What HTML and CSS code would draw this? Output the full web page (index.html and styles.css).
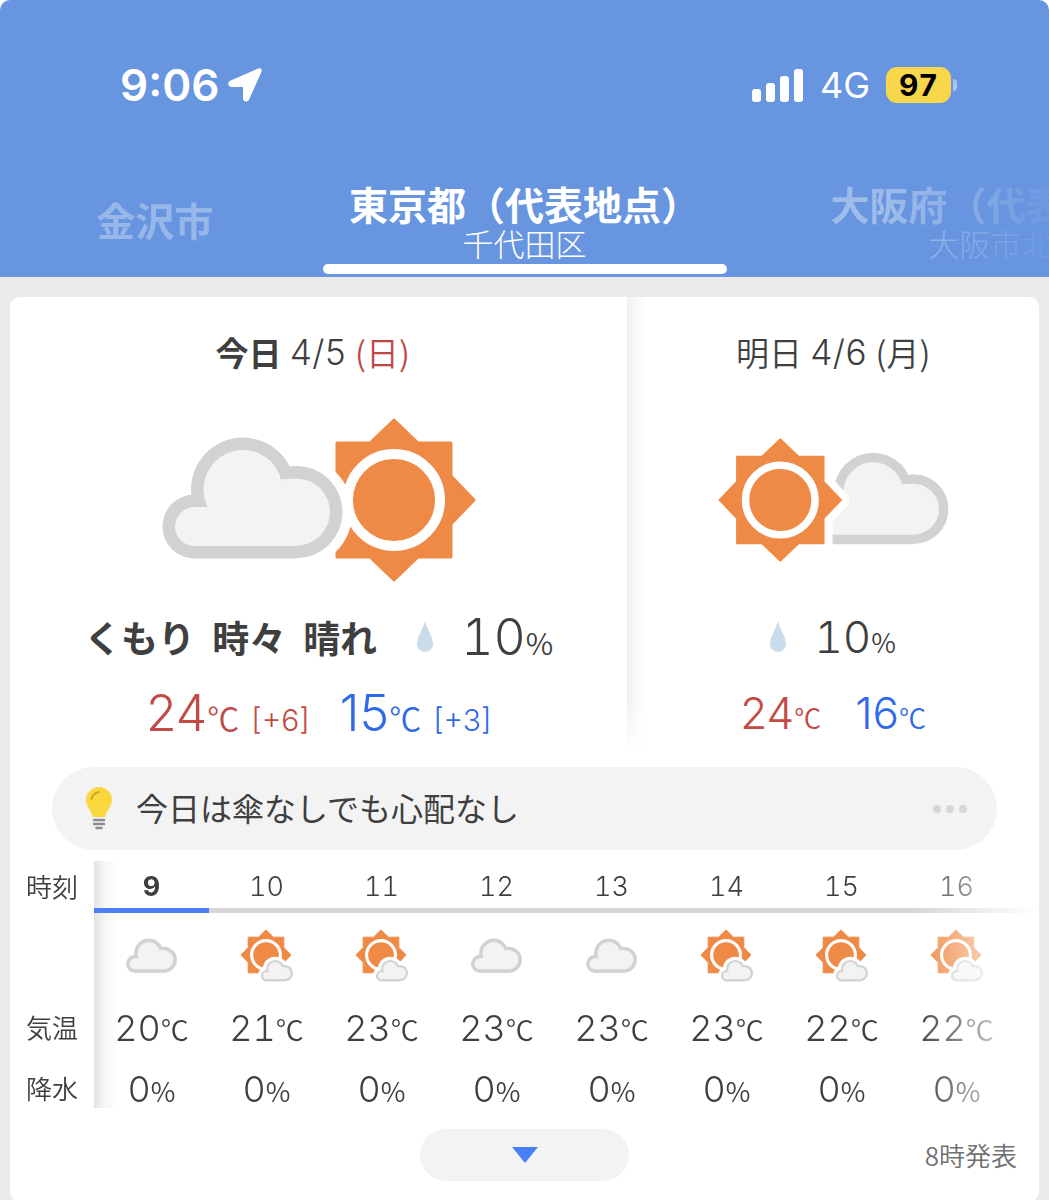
FILE: index.html
```html
<!DOCTYPE html>
<html lang="ja">
<head>
<meta charset="utf-8">
<meta name="viewport" content="width=device-width, initial-scale=1">
<title>天気予報</title>
<link rel="stylesheet" href="styles.css">
</head>
<body>
<svg class="defs" aria-hidden="true">
  <defs>
    <g id="cloud-outer">
      <circle cx="194.5" cy="526.5" r="32"/><circle cx="243" cy="489.5" r="52"/><circle cx="296.5" cy="512" r="46"/>
      <rect x="194.5" y="508" width="102" height="50.5"/>
    </g>
    <g id="cloud">
      <use href="#cloud-outer" fill="#d2d2d2"/>
      <g fill="#f3f3f3">
        <circle cx="194.5" cy="526.5" r="19.5"/><circle cx="243" cy="489.5" r="39.5"/><circle cx="296.5" cy="512" r="33.5"/>
        <rect x="194.5" y="507" width="102" height="39"/>
        <path d="M282 479h14.500v40h-30z"/>
      </g>
    </g>
    <path id="sun-shape" d="M-57 -57H-24L0 -80L24 -57H57V-24L80 0L57 24V57H24L0 80L-24 57H-57V24L-80 0L-57 -24Z" stroke-linejoin="round"/>
    <g id="sun">
      <use href="#sun-shape" fill="#ef8a46" stroke="#ef8a46" stroke-width="3"/>
      <circle r="46" fill="none" stroke="#fff" stroke-width="10"/>
    </g>
    <symbol id="hour-cloud" viewBox="0 0 56 56">
      <use href="#cloud" transform="translate(-44 -113.200) scale(.283)"/>
    </symbol>
    <symbol id="hour-sun-cloud" viewBox="0 0 56 56">
      <use href="#sun" transform="translate(27 27) scale(.313)"/>
      <g transform="translate(-7 -46) scale(.178)">
        <use href="#cloud-outer" fill="#fff" stroke="#fff" stroke-width="36"/>
        <use href="#cloud"/>
      </g>
    </symbol>
    <symbol id="drop" viewBox="0 0 16 32">
      <path d="M8 0C10 8 16 16 16 23A8 8 0 0 1 0 23C0 16 6 8 8 0Z" fill="#c8dcec"/>
    </symbol>
  </defs>
</svg>

<header class="header">
  <div class="status">
    <div class="status-left">
      <span class="clock">9:06</span>
      <svg class="locate" viewBox="0 0 36 36" aria-hidden="true"><path d="M3 15L31.500 2.500Q34.500 1.500 33.500 4.500L21 32.500Q18.500 35 17 32V19H4Q1 17.500 3 15Z" fill="#fff" stroke="#fff" stroke-width="2" stroke-linejoin="round"/></svg>
    </div>
    <div class="status-right">
      <svg class="signal" viewBox="0 0 52 33" aria-hidden="true" fill="#fff"><rect y="20" width="9" height="13" rx="3"/><rect x="14" y="14" width="9" height="19" rx="3"/><rect x="28" y="7" width="9" height="26" rx="3"/><rect x="42" width="9" height="33" rx="3"/></svg>
      <span class="network">4G</span>
      <span class="battery">97</span>
      <span class="battery-tip"></span>
    </div>
  </div>
  <nav class="places">
    <a class="place place-prev" href="#kanazawa">金沢市</a>
    <a class="place place-current" href="#tokyo" aria-current="page">東京都（代表地点）<span class="ward">千代田区</span></a>
    <a class="place place-next" href="#osaka">大阪府（代表地点）<span class="ward">大阪市北区</span></a>
  </nav>
</header>

<main class="page">
  <div class="card">
    <div class="days">
      <section class="day">
        <h2 class="date date-today"><b>今日</b><span class="md">4/5</span><span class="sunday">(日)</span></h2>
        <svg class="weather weather-large" viewBox="162 418 314 164" role="img" aria-label="くもり時々晴れ">
          <use href="#sun" transform="translate(394 500)"/>
          <path d="M308 470H334.500V530H308Z" fill="#fff"/>
          <path d="M296.500 456A56 56 0 0 1 296.500 568Z" fill="#fff"/>
          <use href="#cloud"/>
        </svg>
        <div class="summary">
          <strong class="condition"><span>くもり</span> <span>時々</span> <span>晴れ</span></strong>
          <svg class="drop" aria-hidden="true"><use href="#drop"/></svg>
          <span class="chance">10<small>%</small></span>
        </div>
        <div class="temps">
          <span class="high">24<small>℃</small><span class="diff">[+6]</span></span>
          <span class="low">15<small>℃</small><span class="diff">[+3]</span></span>
        </div>
      </section>
      <section class="day day-next">
        <h2 class="date"><span>明日</span><span class="md">4/6</span><span>(月)</span></h2>
        <svg class="weather weather-medium" viewBox="717 438 231 124" role="img" aria-label="晴れのちくもり">
          <use href="#cloud" transform="translate(688.500 122) scale(.756)"/>
          <path d="M800 520H831.500V550H800Z" fill="#fff"/>
          <g transform="translate(779.300 500) scale(.756)">
            <use href="#sun-shape" fill="#fff" stroke="#fff" stroke-width="23"/>
            <use href="#sun"/>
          </g>
        </svg>
        <div class="summary">
          <svg class="drop" aria-hidden="true"><use href="#drop"/></svg>
          <span class="chance">10<small>%</small></span>
        </div>
        <div class="temps">
          <span class="high">24<small>℃</small></span>
          <span class="low">16<small>℃</small></span>
        </div>
      </section>
    </div>

    <button class="tip" type="button">
      <svg class="bulb" viewBox="0 0 26 43" aria-hidden="true">
        <path d="M13 0A13 13 0 0 1 26 13C26 20 20 23 19.500 30H6.500C6 23 0 20 0 13A13 13 0 0 1 13 0Z" fill="#f9d73e"/>
        <path d="M5.500 12Q7 6 13 5" fill="none" stroke="#c9a62c" stroke-width="2" stroke-linecap="round"/>
        <path d="M8 33H18M8 37H18M10.500 41H15.500" stroke="#8b8c98" stroke-width="2.500" stroke-linecap="round"/>
      </svg>
      <span class="tip-text">今日は傘なしでも心配なし</span>
      <svg class="more" viewBox="0 0 34 8" aria-hidden="true" fill="#d6d6d6"><circle cx="4" cy="4" r="4"/><circle cx="17" cy="4" r="4"/><circle cx="30" cy="4" r="4"/></svg>
    </button>

    <table class="hours">
      <colgroup><col class="col-label"><col span="8"><col class="col-end"></colgroup>
      <thead>
        <tr class="row-time"><th scope="row">時刻</th><th scope="col" class="now">9</th><th scope="col">10</th><th scope="col">11</th><th scope="col">12</th><th scope="col">13</th><th scope="col">14</th><th scope="col">15</th><th scope="col">16</th><td></td></tr>
      </thead>
      <tbody>
        <tr class="row-icon"><td></td><td><svg role="img" aria-label="くもり"><use href="#hour-cloud"/></svg></td><td><svg role="img" aria-label="晴れ"><use href="#hour-sun-cloud"/></svg></td><td><svg role="img" aria-label="晴れ"><use href="#hour-sun-cloud"/></svg></td><td><svg role="img" aria-label="くもり"><use href="#hour-cloud"/></svg></td><td><svg role="img" aria-label="くもり"><use href="#hour-cloud"/></svg></td><td><svg role="img" aria-label="晴れ"><use href="#hour-sun-cloud"/></svg></td><td><svg role="img" aria-label="晴れ"><use href="#hour-sun-cloud"/></svg></td><td><svg role="img" aria-label="晴れ"><use href="#hour-sun-cloud"/></svg></td><td></td></tr>
        <tr class="row-temp"><th scope="row">気温</th><td>20<small>℃</small></td><td>21<small>℃</small></td><td>23<small>℃</small></td><td>23<small>℃</small></td><td>23<small>℃</small></td><td>23<small>℃</small></td><td>22<small>℃</small></td><td>22<small>℃</small></td><td></td></tr>
        <tr class="row-rain"><th scope="row">降水</th><td>0<small>%</small></td><td>0<small>%</small></td><td>0<small>%</small></td><td>0<small>%</small></td><td>0<small>%</small></td><td>0<small>%</small></td><td>0<small>%</small></td><td>0<small>%</small></td><td></td></tr>
      </tbody>
    </table>

    <footer class="card-foot">
      <button class="expand" type="button" aria-label="もっと見る"><svg viewBox="0 0 26 16" aria-hidden="true"><path d="M0 0H26L13 16Z" fill="#4a80f5"/></svg></button>
      <span class="issued">8時発表</span>
    </footer>
  </div>
</main>
</body>
</html>
```
FILE: styles.css
```css
* { box-sizing: border-box; }

body {
  margin: 0;
  background: #fff;
  color: #3f3f3f;
  font-family: "Inter", "Noto Sans CJK JP", sans-serif;
  font-weight: 300;
  font-variant-numeric: tabular-nums;
}

a { color: inherit; text-decoration: none; }
button { border: 0; font: inherit; color: inherit; cursor: pointer; }
small {
  font-family: "Noto Sans CJK JP", sans-serif;
  font-size: inherit;
  font-weight: 350;
  line-height: 1;
}
svg { display: block; flex: none; }
.defs { position: absolute; width: 0; height: 0; }

/* Header */
.header {
  background: #6795df;
  border-radius: 10px 10px 0 0;
  color: #fff;
  overflow: hidden;
}
.status {
  display: flex;
  justify-content: space-between;
  align-items: center;
  height: 170px;
  padding: 0 92px 0 120px;
}
.status-left, .status-right { display: flex; align-items: center; }
.status-left { gap: 8px; }
.clock { font-size: 44px; font-weight: 600; font-variant-numeric: normal; line-height: 50px; }
.locate { width: 36px; height: 36px; }
.signal { width: 52px; height: 33px; margin-right: 16px; }
.network { font-size: 36px; font-weight: 400; font-variant-numeric: normal; margin-right: 16px; }
.battery {
  width: 65px;
  border-radius: 11px;
  background: #f8d84a;
  color: #000;
  font-size: 30px;
  font-weight: 700;
  line-height: 36px;
  text-align: center;
}
.battery-tip {
  width: 4px;
  height: 12px;
  margin-left: 2px;
  border-radius: 0 6px 6px 0;
  background: #a8c3ee;
}

.places {
  display: grid;
  grid-template-columns: 1fr 404px 1fr;
  height: 107px;
}
.place {
  padding-top: 8px;
  font-family: "Noto Sans CJK JP", sans-serif;
  font-size: 39px;
  font-weight: 700;
  line-height: 50px;
  white-space: nowrap;
}
.ward {
  display: block;
  font-size: 31px;
  font-weight: 300;
  line-height: 30px;
}
.place-current {
  display: flex;
  flex-direction: column;
  align-items: center;
}
.place-current::after {
  content: "";
  width: 100%;
  height: 10px;
  margin-top: 6px;
  border-radius: 5px;
  background: #fff;
}
.place-prev {
  justify-self: end;
  padding: 24px 109px 0 0;
  opacity: .32;
}
.place-next {
  justify-self: start;
  width: 100%;
  padding-left: 104px;
  overflow: hidden;
  opacity: .36;
  -webkit-mask-image: linear-gradient(to right, #000 50%, transparent 108%);
  mask-image: linear-gradient(to right, #000 50%, transparent 108%);
}
.place-next .ward { padding-left: 98px; }

/* Forecast card */
.page { padding: 20px 10px 0; background: #ebebeb; }
.card {
  padding-bottom: 21px;
  border-radius: 10px;
  background: #fff;
  overflow: hidden;
}
.days { display: grid; grid-template-columns: 3fr 2fr; }
.day {
  display: flex;
  flex-direction: column;
  align-items: center;
  height: 458px;
  padding-top: 36px;
}
.day-next {
  background:
    linear-gradient(to bottom, transparent 88%, #fff),
    linear-gradient(to right, #f0f0f0, #fafafa 10px, #fff 20px);
}
.date {
  display: flex;
  gap: 8px;
  margin: 0;
  font-family: "Noto Sans CJK JP", sans-serif;
  font-size: 33px;
  font-weight: 350;
  line-height: 38px;
  padding-bottom: 2px;
}
.date-today { padding-right: 12px; }
.date b { font-weight: 700; }
.md { font-family: "Inter", sans-serif; font-size: 35px; font-weight: 300; }
.sunday { color: #bf4742; }
.weather-large { width: 314px; height: 164px; margin: 45px 0; }
.weather-medium { width: 231px; height: 124px; margin: 65px 0; }
.summary, .temps { display: flex; height: 60px; line-height: 60px; }
.summary { align-items: center; margin-top: -20px; }
.condition {
  display: flex;
  gap: 17px;
  font-family: "Noto Sans CJK JP", sans-serif;
  font-size: 37px;
  font-weight: 700;
}
.drop { width: 16px; height: 32px; margin: 0 28px 0 40px; }
.chance, .high, .low { font-size: 50px; }
.summary small { font-size: 30px; }
.temps { margin-top: 16px; gap: 30px; font-variant-numeric: normal; }
.high { color: #c34a45; }
.low { color: #3068ea; }
.temps small { font-size: 32px; }
.diff { margin-left: 12px; font-size: 30px; font-weight: 300; }
.day-next .drop { margin: 0 28px 0 0; }
.day-next .chance, .day-next .high, .day-next .low { font-size: 44px; }
.day-next small { font-size: 27px; }
.day-next .temps { gap: 34px; }

/* Advice */
.tip {
  display: flex;
  align-items: center;
  width: calc(100% - 84px);
  height: 83px;
  margin: 12px 42px 11px;
  padding: 0 30px 0 34px;
  border-radius: 42px;
  background: #f3f3f3;
}
.bulb { width: 26px; height: 43px; margin-right: 24px; }
.tip-text {
  flex: 1;
  font-family: "Noto Sans CJK JP", sans-serif;
  font-size: 32px;
  font-weight: 400;
  line-height: 44px;
  padding-bottom: 4px;
  text-align: left;
}
.more { width: 34px; height: 8px; }

/* Hourly forecast */
.hours {
  width: 100%;
  table-layout: fixed;
  border-collapse: separate;
  border-spacing: 0;
  text-align: center;
  -webkit-mask-image: linear-gradient(to right, #000 calc(100% - 125px), transparent calc(100% - 4px));
  mask-image: linear-gradient(to right, #000 calc(100% - 125px), transparent calc(100% - 4px));
}
.col-label { width: 84px; }
.col-end { width: 25px; }
.hours th, .hours td { padding: 0; font-weight: 300; }
.hours [scope="row"] {
  padding-bottom: 2px;
  font-family: "Noto Sans CJK JP", sans-serif;
  font-size: 26px;
  font-weight: 350;
  line-height: 36px;
}
.hours tr > :nth-child(2) {
  background: linear-gradient(to right, #e2e2e2, #f6f6f6 10px, #fff 24px) no-repeat;
}
.row-time { height: 52px; font-size: 27px; }
.hours .row-time > [scope="col"] { padding-top: 4px; }
.row-time > :not(:first-child) { border-bottom: 5px solid #d6d6d6; }
.hours .row-time > .now { border-bottom-color: #4a80f5; font-weight: 700; }
.row-icon { height: 85px; }
.row-icon svg { width: 56px; height: 56px; margin: 0 auto; }
.row-temp { height: 60px; font-size: 36px; }
.row-temp small { font-size: 28px; }
.row-rain { height: 48px; font-size: 36px; }
.hours .row-rain > * { padding-top: 12px; line-height: 36px; }
.row-rain small { font-size: 27px; line-height: 1; }

.card-foot {
  display: grid;
  grid-template-columns: 1fr auto 1fr;
  align-items: center;
  padding: 21px 22px 0;
}
.expand {
  grid-column: 2;
  display: grid;
  place-items: center;
  width: 209px;
  height: 52px;
  border-radius: 26px;
  background: #f3f3f3;
}
.expand svg { width: 26px; height: 16px; }
.issued {
  justify-self: end;
  color: #707070;
  font-family: "Noto Sans CJK JP", sans-serif;
  font-size: 26px;
  font-weight: 350;
  line-height: 36px;
}
```
